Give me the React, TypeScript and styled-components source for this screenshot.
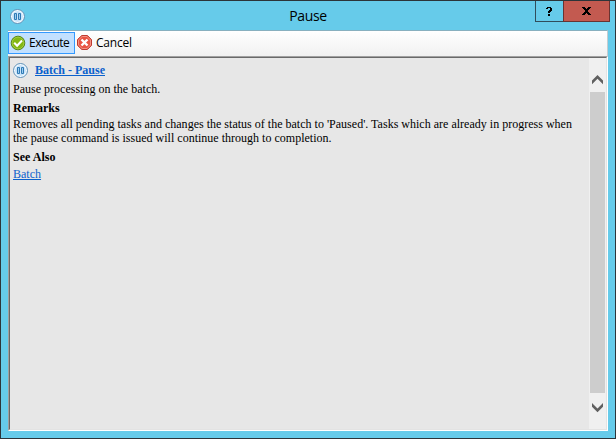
import React from "react";
import styled, { createGlobalStyle } from "styled-components";

const GlobalStyle = createGlobalStyle`
  * { box-sizing: border-box; }
  body { margin: 0; overflow: hidden; }
`;

const Window = styled.div`
  width: 616px;
  height: 439px;
  border: 1px solid #2c3439;
  background: #66cbea;
  display: flex;
  flex-direction: column;
  font-family: "Open Sans", "Noto Sans", sans-serif;
  color: #000;
`;

const TitleBar = styled.header`
  height: 29px;
  flex: none;
  display: grid;
  grid-template-columns: 80px 1fr 80px;
  padding-left: 9px;
`;

const TitleIcon = styled.div`
  padding-top: 6px;
  height: 22px;
`;

const Title = styled.h1`
  margin: 0;
  font-size: 14px;
  font-weight: 400;
  line-height: 29px;
  text-align: center;
  letter-spacing: -0.4px;
  padding-right: 9px;
`;

const Controls = styled.div`
  display: flex;
  justify-content: flex-end;
  padding-right: 5px;
`;

const Control = styled.button<{ $danger?: boolean }>`
  width: ${(p) => (p.$danger ? 47 : 28)}px;
  height: 21px;
  padding: 0;
  display: flex;
  align-items: center;
  justify-content: center;
  border: 1px solid ${(p) => (p.$danger ? "#693331" : "#304d5b")};
  border-top: 0;
  border-right-width: ${(p) => (p.$danger ? 1 : 0)}px;
  background: ${(p) => (p.$danger ? "#c35a50" : "#66cbea")};
`;

const Client = styled.main`
  width: 600px;
  height: 401px;
  margin-left: 7px;
  display: flex;
  flex-direction: column;
`;

const Toolbar = styled.div`
  height: 26px;
  flex: none;
  display: flex;
  padding: 1px 0 1px;
  border-top: 1px solid #88b0bf;
  border-right: 1px solid #c4cdd1;
  background: linear-gradient(#ffffff, #f1f1f1);
`;

const ToolButton = styled.button<{ $active?: boolean }>`
  height: 22px;
  width: 67px;
  padding: 0 0 0 1px;
  display: flex;
  align-items: center;
  gap: 3px;
  border: 1px solid ${(p) => (p.$active ? "#3399ff" : "transparent")};
  background: ${(p) => (p.$active ? "#c2e0ff" : "transparent")};
  font: 12px/18px "Open Sans", "Noto Sans", sans-serif;
  letter-spacing: ${(p) => (p.$active ? -0.5 : -0.2)}px;
  color: #000;
`;

const Panel = styled.div`
  flex: 1;
  display: flex;
  border: 1px solid;
  border-color: #a0a0a0 #ffffff #ffffff #a0a0a0;
`;

const PanelInner = styled.div`
  flex: 1;
  display: flex;
  border: 1px solid;
  border-color: #696969 #e3e3e3 #e3e3e3 #696969;
  background: #e7e7e7;
`;

const Article = styled.article`
  flex: 1;
  padding: 5px 0 0 3px;
  font: 12px/14px "Liberation Serif", "Times New Roman", serif;
  letter-spacing: 0.01px;
`;

const Heading = styled.div`
  display: flex;
  height: 16px;
  gap: 7px;
  line-height: 15px;
  margin-bottom: 3px;
`;

const Link = styled.a`
  color: #0b61cc;
  text-decoration: underline;
`;

const TopicLink = styled(Link)`
  font-weight: 700;
  letter-spacing: 0;
`;

const Line = styled.div`
  white-space: nowrap;
`;

const Subheading = styled.h2`
  margin: 5px 0 2px;
  font-size: 12px;
  line-height: 14px;
`;

const RelatedLinks = styled.nav`
  padding-top: 1px;
`;

const ScrollBar = styled.div`
  width: 17px;
  flex: none;
  display: flex;
  flex-direction: column;
  align-items: center;
  padding-top: 17px;
  background: #f0f0f0;
`;

const Thumb = styled.div`
  width: 15px;
  height: 301px;
  margin: 7px 0 10px;
  background: #cdcdcd;
`;

function PauseIcon() {
  return (
    <svg width="15" height="15" viewBox="0 0 15 15">
      <circle cx="7.5" cy="7.5" r="7" fill="#f4faff" stroke="#5f91b8" />
      <circle cx="7.5" cy="7.5" r="5.4" fill="#c9e4fa" />
      <path d="M4.5 4.5h2v6h-2ZM8.5 4.5h2v6h-2Z" fill="#9accf0" stroke="#2f7ab5" strokeLinejoin="round" />
    </svg>
  );
}

function ExecuteIcon() {
  return (
    <svg width="16" height="16" viewBox="0 0 16 16">
      <circle cx="8" cy="8" r="6.8" fill="#84b814" stroke="#4f8016" />
      <circle cx="8" cy="8" r="5.9" fill="none" stroke="#a9d04b" strokeWidth=".8" />
      <path d="M4.2 7.8 7.1 10.7 12 5.6" fill="none" stroke="#fff" strokeWidth="2.1" />
    </svg>
  );
}

function CancelIcon() {
  return (
    <svg width="16" height="16" viewBox="0 0 16 16">
      <path d="M4.8 .5h5.6l4.1 4.1v5.8l-4.1 4.1H4.8L.5 10.4V4.6Z" fill="#e95443" stroke="#bd3b32" strokeLinejoin="round" />
      <path d="M5.2 1.5h4.8l3.5 3.5v5l-3.5 3.5H5.2L1.5 10V5Z" fill="none" stroke="#f39a8c" strokeWidth=".9" />
      <path d="m4.5 4.5 6 6m0-6-6 6" stroke="#fff" strokeWidth="2.4" />
    </svg>
  );
}

function HelpGlyph() {
  return (
    <svg width="7" height="9" viewBox="0 0 7 9" shapeRendering="crispEdges">
      <path d="M0 1h1V0h4v1h1v3H5v1H4v1H2V4h1V3h1V1H2v1H0ZM2 7h2v2H2Z" />
    </svg>
  );
}

function CloseGlyph() {
  return (
    <svg width="9" height="8" viewBox="0 0 9 8" shapeRendering="crispEdges">
      <path d="M0 0h3v1h1v1h1V1h1V0h3v1H8v1H7v1H6v2h1v1h1v1h1v1H6V7H5V6H4v1H3v1H0V7h1V6h1V5h1V3H2V2H1V1H0Z" />
    </svg>
  );
}

function Chevron({ down }: { down?: boolean }) {
  return (
    <svg width="11" height="10" viewBox="0 0 11 10">
      <path
        d={down ? "M0 0v3.8L5.5 9.3 11 3.8V0L5.5 5.5Z" : "M0 9.3V5.5L5.5 0 11 5.5v3.8L5.5 3.8Z"}
        fill="#606060"
      />
    </svg>
  );
}

export default function App() {
  return (
    <>
      <GlobalStyle />
      <Window>
        <TitleBar>
          <TitleIcon><PauseIcon /></TitleIcon>
          <Title>Pause</Title>
          <Controls>
            <Control aria-label="Help"><HelpGlyph /></Control>
            <Control $danger aria-label="Close"><CloseGlyph /></Control>
          </Controls>
        </TitleBar>
        <Client>
          <Toolbar>
            <ToolButton $active><ExecuteIcon />Execute</ToolButton>
            <ToolButton><CancelIcon />Cancel</ToolButton>
          </Toolbar>
          <Panel>
            <PanelInner>
              <Article>
                <Heading><PauseIcon /><TopicLink>Batch - Pause</TopicLink></Heading>
                <Line>Pause processing on the batch.</Line>
                <Subheading>Remarks</Subheading>
                <Line>Removes all pending tasks and changes the status of the batch to 'Paused'. Tasks which are already in progress when</Line>
                <Line>the pause command is issued will continue through to completion.</Line>
                <Subheading>See Also</Subheading>
                <RelatedLinks><Link>Batch</Link></RelatedLinks>
              </Article>
              <ScrollBar>
                <Chevron />
                <Thumb />
                <Chevron down />
              </ScrollBar>
            </PanelInner>
          </Panel>
        </Client>
      </Window>
    </>
  );
}
